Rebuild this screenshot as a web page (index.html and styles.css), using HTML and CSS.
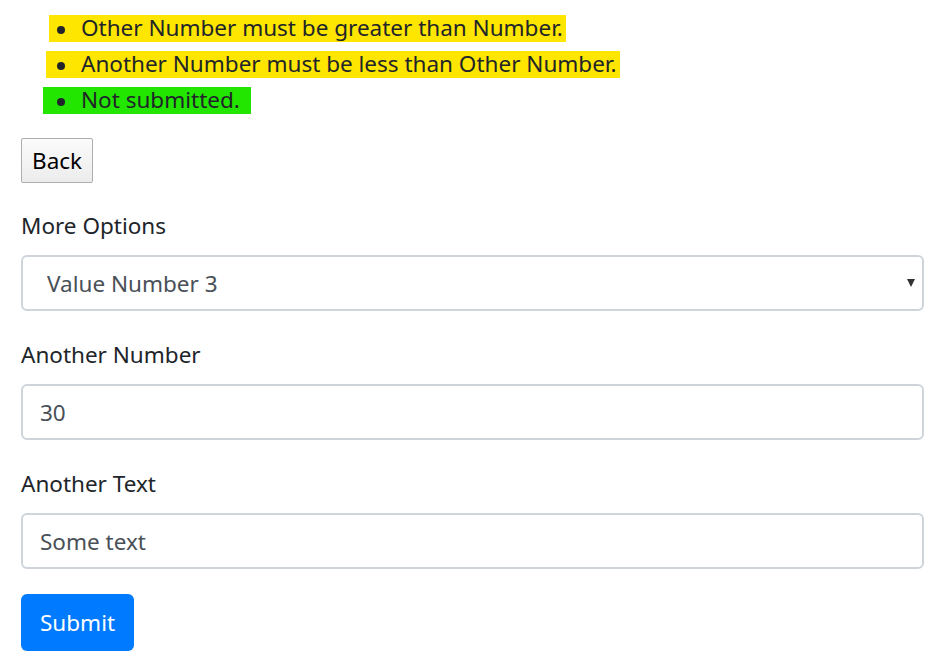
FILE: index.html
```html
<!DOCTYPE html>
<html lang="en">
<head>
  <meta charset="UTF-8">
  <title>Validation Form</title>
  <link rel="stylesheet" href="styles.css">
</head>
<body>
  <div class="container">
    <ul class="messages">
      <li class="msg warn first">Other Number must be greater than Number.</li>
      <li class="msg warn second">Another Number must be less than Other Number.</li>
      <li class="msg ok third">Not submitted.</li>
    </ul>

    <button class="back-btn" type="button">Back</button>

    <form>
      <div class="form-group">
        <label for="moreOptions">More Options</label>
        <div class="select-wrap">
          <select id="moreOptions" class="form-control select">
            <option>Value Number 1</option>
            <option>Value Number 2</option>
            <option selected>Value Number 3</option>
          </select>
        </div>
      </div>
      <div class="form-group">
        <label for="anotherNumber">Another Number</label>
        <input type="text" id="anotherNumber" class="form-control" value="30">
      </div>
      <div class="form-group">
        <label for="anotherText">Another Text</label>
        <input type="text" id="anotherText" class="form-control" value="Some text">
      </div>
      <button type="submit" class="btn-primary">Submit</button>
    </form>
  </div>
</body>
</html>
```

FILE: styles.css
```css
body {
  margin: 0;
  font-family: "Noto Sans", "Open Sans", sans-serif;
  font-size: 22.5px;
  color: #212529;
  background: #fff;
}
.container {
  padding: 15px 19px 0 21px;
}
.messages {
  list-style: none;
  margin: 0 0 24px;
  padding: 0;
}
.msg {
  width: fit-content;
  line-height: 26px;
  padding-bottom: 1px;
  margin-bottom: 9px;
  padding-right: 3px;
}
.msg::before {
  content: "";
  display: inline-block;
  width: 8px;
  height: 8px;
  margin-right: 16px;
  vertical-align: middle;
  border-radius: 50%;
  background: #212529;
}
.msg.first {
  margin-left: 28px;
  padding-left: 8px;
}
.msg.second {
  margin-left: 25px;
  padding-left: 11px;
}
.msg.third {
  margin-left: 22px;
  padding-left: 14px;
  padding-right: 11px;
}
.warn {
  background-color: #ffe600;
}
.ok {
  background-color: #22e600;
}
.back-btn {
  display: block;
  height: 45px;
  padding: 0 10px;
  font-family: inherit;
  font-size: 22.5px;
  color: #000;
  background: linear-gradient(#fbfbfb, #ececec);
  border: 1px solid #adadad;
  border-radius: 2px;
  margin-bottom: 26px;
}
.form-group {
  margin-bottom: 27px;
}
.form-group:last-of-type {
  margin-bottom: 25px;
}
label {
  display: block;
  line-height: 34px;
  margin-bottom: 12px;
}
.form-control {
  display: block;
  box-sizing: border-box;
  width: 100%;
  height: 56px;
  padding: 0 17px;
  font-family: inherit;
  font-size: 22.5px;
  color: #495057;
  background: #fff;
  border: 2px solid #ced4da;
  border-radius: 6px;
}
.select-wrap {
  position: relative;
}
.select {
  appearance: none;
  padding-left: 24px;
}
.select-wrap::after {
  content: "";
  position: absolute;
  right: 9px;
  top: 24px;
  border-left: 4px solid transparent;
  border-right: 4px solid transparent;
  border-top: 8px solid #333;
}
.btn-primary {
  height: 57px;
  padding: 0 19px;
  font-family: inherit;
  font-size: 22.5px;
  color: #fff;
  background-color: #007bff;
  border: none;
  border-radius: 6px;
}
```
